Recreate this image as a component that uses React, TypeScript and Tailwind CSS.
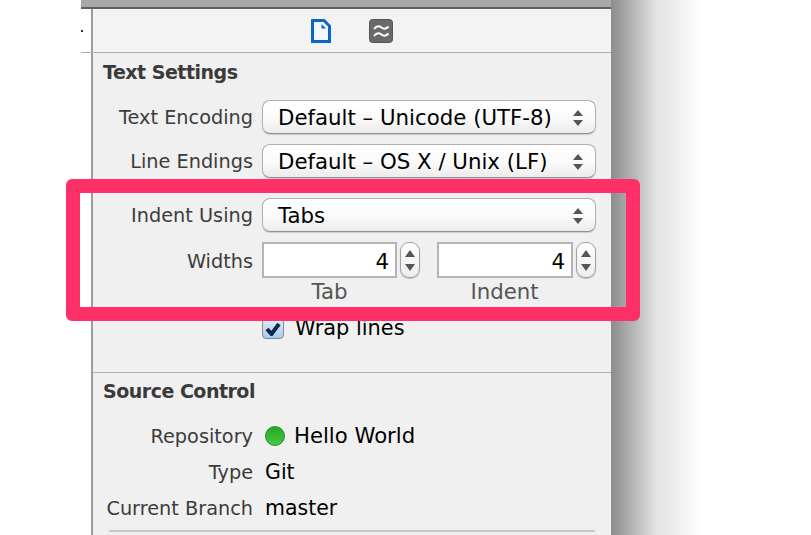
const font = { fontFamily: '"DejaVu Sans", sans-serif' };

function Chevrons() {
  return (
    <svg width="12" height="18" viewBox="0 0 12 18" className="absolute right-[11px] top-[8px]">
      <path d="M6 1 L11 7 H1 Z" fill="#555" />
      <path d="M6 17 L11 11 H1 Z" fill="#555" />
    </svg>
  );
}

function Select({ value }: { value: string }) {
  return (
    <div className="relative flex h-[34px] w-[334px] items-center rounded-[8px] border border-[#b0b0b0] border-b-[#8f8f8f] bg-gradient-to-b from-white via-[#fbfbfb] via-50% to-[#ececec] pt-[1px] pl-[15px] text-[21.3px] text-black shadow-[0_1px_1px_rgba(0,0,0,0.15)]">
      {value}
      <Chevrons />
    </div>
  );
}

function Stepper() {
  return (
    <div className="flex h-[36px] w-[20px] flex-col items-center justify-center gap-[7px] rounded-[9px] border border-[#a0a0a0] bg-gradient-to-b from-white to-[#ededed] shadow-[0_1px_1px_rgba(0,0,0,0.2)]">
      <svg width="10" height="7" viewBox="0 0 10 7"><path d="M5 0 L10 7 H0 Z" fill="#555" /></svg>
      <svg width="10" height="7" viewBox="0 0 10 7"><path d="M5 7 L10 0 H0 Z" fill="#555" /></svg>
    </div>
  );
}

function WidthField({ label, inputClass }: { label: string; inputClass: string }) {
  return (
    <div className="flex w-[159px] flex-col">
      <div className="flex items-center gap-[3px]">
        <div className={`flex h-[36px] items-center justify-end border-2 border-[#b4b4b4] bg-white pr-[6px] pt-[3px] text-[21.3px] text-black ${inputClass}`}>4</div>
        <Stepper />
      </div>
      <div className="flex h-[27px] w-[135px] items-center justify-center pt-[1px] text-[21.3px] text-[#555]">{label}</div>
    </div>
  );
}

function Row({ label, children, className }: { label: string; children: React.ReactNode; className?: string }) {
  return (
    <div className={`flex items-center ${className ?? ''}`}>
      <div className="w-[160px] pt-[2px] text-right text-[19.3px] text-[#3c3c3c]">{label}</div>
      <div className="ml-[9px]">{children}</div>
    </div>
  );
}

export default function App() {
  return (
    <div className="relative flex h-[535px] w-[811px] overflow-hidden bg-white" style={font}>
      <div className="ml-[81px] flex h-full w-[530px] flex-col">
        {/* window top */}
        <div className="h-[9px] shrink-0 border-b-2 border-[#606060] bg-[#a9a9a9]" />

        {/* inspector tabs */}
        <div className="flex h-[43px] shrink-0">
          <div className="w-[10px] bg-white">
            <div className="mt-[21px] h-[2px] w-[2px] bg-[#333]" />
          </div>
          <div className="flex flex-1 items-center border-l-2 border-[#9c9c9c] bg-[#f3f3f3]">
            <svg width="20" height="24" viewBox="0 0 20 24" className="ml-[218px]">
              <path d="M1.5 1.5 H13 L18.5 7 V22.5 H1.5 Z" fill="#f4f9ff" stroke="#0a66cc" strokeWidth="3" />
              <path d="M10.5 5 L15 9.5 H10.5 Z" fill="#0a66cc" />
            </svg>
            <svg width="24" height="24" viewBox="0 0 24 24" className="ml-[38px]">
              <rect x="0.5" y="0.5" width="23" height="23" rx="3" fill="#6a6a6a" stroke="#555" />
              <path d="M5 10 C8 6 11 7 12.5 8.5 C14 10 17 10.5 19.5 7.5" fill="none" stroke="#fff" strokeWidth="2" />
              <path d="M5 17 C8 13 11 14 12.5 15.5 C14 17 17 17.5 19.5 14.5" fill="none" stroke="#fff" strokeWidth="2" />
            </svg>
          </div>
        </div>
        <div className="h-[1px] shrink-0 bg-[#b0b0b0]" />

        {/* inspector body */}
        <div className="ml-[10px] flex flex-1 flex-col border-l-2 border-[#9c9c9c] bg-[#f0f0f0]">
          <div className="flex h-[38px] items-center pl-[10px] text-[19px] font-bold tracking-[-0.5px] text-[#3a3a3a]">Text Settings</div>
          <Row label="Text Encoding" className="mt-[9px]"><Select value="Default – Unicode (UTF-8)" /></Row>
          <Row label="Line Endings" className="mt-[10px]"><Select value="Default – OS X / Unix (LF)" /></Row>
          <Row label="Indent Using" className="mt-[20px]"><Select value="Tabs" /></Row>
          <div className="mt-[10px] flex items-start">
            <div className="flex h-[36px] w-[160px] items-center justify-end pt-[4px] text-[19.3px] text-[#3c3c3c]">Widths</div>
            <div className="ml-[9px] flex gap-[16px]">
              <WidthField label="Tab" inputClass="w-[135px]" />
              <WidthField label="Indent" inputClass="w-[136px]" />
            </div>
          </div>
          <div className="ml-[169px] mt-[13px] flex h-[21px] items-center gap-[11px] text-[20.9px] text-black">
            <div className="flex h-[21px] w-[22px] items-center justify-center rounded-[4px] border border-[#8a8a8a] bg-gradient-to-b from-[#dfeaf6] to-[#a9cbee]">
              <svg width="16" height="14" viewBox="0 0 16 14"><path d="M2 7 L6.5 12 L14 2" fill="none" stroke="#0d2a4d" strokeWidth="4" /></svg>
            </div>
            Wrap lines
          </div>

          <div className="mt-[33px] h-[1px] bg-[#b0b0b0]" />
          <div className="flex h-[36px] items-center pl-[10px] text-[19px] font-bold tracking-[-0.5px] text-[#3a3a3a]">Source Control</div>
          <div className="mt-[9px] flex flex-col">
            <Row label="Repository" className="h-[36px]">
              <div className="ml-[3px] flex items-center gap-[9px] text-[21.2px] text-black">
                <div className="h-[20px] w-[20px] rounded-full border border-[#2c8a2c] bg-gradient-to-b from-[#27a527] to-[#45cc45]" />
                Hello World
              </div>
            </Row>
            <Row label="Type" className="h-[36px]"><div className="ml-[3px] text-[20.5px] text-black">Git</div></Row>
            <Row label="Current Branch" className="h-[36px]"><div className="ml-[3px] text-[20.5px] text-black">master</div></Row>
          </div>
          <div className="ml-[16px] mt-[4px] h-[2px] w-[486px] bg-[#c8c8c8]" />
        </div>
      </div>

      {/* window shadow */}
      <div className="h-full w-[90px] bg-gradient-to-r from-[#8c8c8c] via-[#e2e2e2] via-50% to-white" />

      {/* highlight */}
      <div className="absolute left-[66px] top-[179px] h-[142px] w-[574px] rounded-[6px] border-[14px] border-[#ff2f68]" />
    </div>
  );
}
